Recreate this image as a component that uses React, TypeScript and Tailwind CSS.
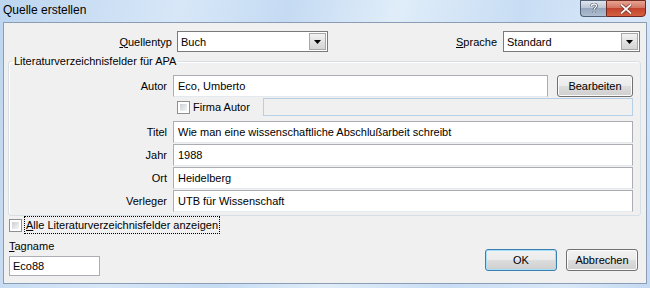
import { ReactNode } from 'react';

const ui = "font-['Liberation_Sans',Arial,sans-serif] text-[11px] leading-[14px] text-black";

function Combo({ value, className }: { value: string; className: string }) {
    return (
        <div className={`flex h-[21px] border border-[#7a7a7a] bg-white ${className}`}>
            <div className="flex flex-1 items-center pl-[3px]">{value}</div>
            <div className="m-[1px] flex w-[17px] items-center justify-center border border-[#a7a7a7] bg-[linear-gradient(#f3f3f3,#e2e2e2_50%,#d4d4d4)]">
                <svg width="7" height="4" viewBox="0 0 7 4">
                    <path d="M0 0h7L3.5 4z" fill="#000" />
                </svg>
            </div>
        </div>
    );
}

function Field({ value, className = '' }: { value?: string; className?: string }) {
    return (
        <div className={`flex h-[22px] items-center border border-[#abadb3] border-b-[#e3e9ef] bg-white pl-[4px] ${className}`}>
            {value}
        </div>
    );
}

function Button({ children, main, className = '' }: { children: ReactNode; main?: boolean; className?: string }) {
    return (
        <div
            className={`flex h-[22px] items-center justify-center rounded-[3px] border ${
                main ? 'border-[#3c7fb1] shadow-[inset_0_0_0_1px_#a6e0f8]' : 'border-[#707070] shadow-[inset_0_0_0_1px_#fcfcfc]'
            } bg-[linear-gradient(#f2f2f2,#ebebeb_50%,#dddddd_50%,#cfcfcf)] ${className}`}
        >
            {children}
        </div>
    );
}

function Check() {
    return (
        <div className="h-[13px] w-[13px] border border-[#8e8f8f] bg-white p-[2px]">
            <div className="h-full w-full bg-[linear-gradient(135deg,#cbcfd5,#f6f6f6)]" />
        </div>
    );
}

function Row({ label, children }: { label: string; children: ReactNode }) {
    return (
        <div className="flex items-center">
            <div className="w-[158px] text-right">{label}</div>
            <div className="ml-[6px] flex flex-1">{children}</div>
        </div>
    );
}

export default function App() {
    return (
        <div className={`${ui} flex h-[288px] w-[650px] flex-col bg-[linear-gradient(105deg,#bdd5ef_0%,#d7e7f8_25%,#c5dbf3_40%,#e0edf9_55%,#c8ddf4_72%,#d9e8f8_88%,#c3d9f2_100%)]`}>
            {/* title bar */}
            <div className="flex h-[22px] items-start">
                <div className="ml-[3px] mt-[3px] text-[12px]">Quelle erstellen</div>
                <div className="ml-auto mr-[4px] flex h-[17px]">
                    <div className="flex w-[26px] items-center justify-center rounded-bl-[4px] border border-r-0 border-[#4f5f75] bg-[linear-gradient(#dfe5ed,#bcc7d5_45%,#97a8be_50%,#aebdd0)]">
                        <svg width="8" height="11" viewBox="0 0 8 11">
                            <path d="M1.5 3.2C1.5 1.8 2.6 1 4 1s2.5.8 2.5 2.1c0 1.6-2.5 1.8-2.5 3.6M4 8.6v1.4" fill="none" stroke="#3a4658" strokeWidth="2.6" />
                            <path d="M1.5 3.2C1.5 1.8 2.6 1 4 1s2.5.8 2.5 2.1c0 1.6-2.5 1.8-2.5 3.6M4 8.6v1.4" fill="none" stroke="#fff" strokeWidth="1.3" />
                        </svg>
                    </div>
                    <div className="flex w-[40px] items-center justify-center rounded-br-[4px] border border-[#6e2a20] bg-[linear-gradient(#e8a493,#d47563_45%,#c2432d_50%,#d5603f)]">
                        <svg width="12" height="10" viewBox="0 0 12 10">
                            <path d="M1 0.5L11 9.5M11 0.5L1 9.5" stroke="#6b2a22" strokeWidth="3.2" />
                            <path d="M1 0.5L11 9.5M11 0.5L1 9.5" stroke="#f7f7f7" strokeWidth="1.8" />
                        </svg>
                    </div>
                </div>
            </div>

            {/* dialog body */}
            <div className="mx-[3px] flex h-[262px] flex-col border border-[#8a9db5] bg-[#f0f0f0]">
                <div className="flex items-center pr-[6px] pt-[8px]">
                    <div className="w-[168px] text-right">
                        <span className="underline">Q</span>uellentyp
                    </div>
                    <Combo value="Buch" className="ml-[5px] w-[151px]" />
                    <div className="ml-auto">
                        <span className="underline">S</span>prache
                    </div>
                    <Combo value="Standard" className="ml-[6px] w-[137px]" />
                </div>

                <fieldset className="ml-[4px] mr-[5px] mt-[2px] flex flex-col gap-[1px] rounded-[3px] border border-[#d5dfe5] pb-[3px] pr-[7px] pt-[7px] shadow-[inset_1px_1px_0_#fff]">
                    <legend className="ml-[3px] px-[2px]">Literaturverzeichnisfelder für APA</legend>
                    <Row label="Autor">
                        <Field value="Eco, Umberto" className="w-[375px]" />
                        <Button className="ml-[9px] w-[76px]">Bearbeiten</Button>
                    </Row>
                    <div className="mb-[4px] flex h-[18px] items-center pl-[168px]">
                        <Check />
                        <div className="ml-[3px] w-[70px]">Firma Autor</div>
                        <div className="h-[18px] flex-1 border border-[#b5cfe7] bg-[#f0f0f0]" />
                    </div>
                    <Row label="Titel">
                        <Field value="Wie man eine wissenschaftliche Abschlußarbeit schreibt" className="flex-1" />
                    </Row>
                    <Row label="Jahr">
                        <Field value="1988" className="flex-1" />
                    </Row>
                    <Row label="Ort">
                        <Field value="Heidelberg" className="flex-1" />
                    </Row>
                    <Row label="Verleger">
                        <Field value="UTB für Wissenschaft" className="flex-1" />
                    </Row>
                </fieldset>

                <div className="flex flex-1 items-end pb-[8px] pr-[8px]">
                    <div className="flex flex-col pl-[5px]">
                        <div className="flex items-center">
                            <Check />
                            <div className="ml-[2px] border border-dotted border-[#000] px-[1px] py-[1px]">
                                <span className="underline">A</span>lle Literaturverzeichnisfelder anzeigen
                            </div>
                        </div>
                        <div className="mt-[5px]">
                            <span className="underline">T</span>agname
                        </div>
                        <div className="mt-[3px] flex h-[20px] w-[91px] items-center border border-[#abadb3] bg-white pl-[3px]">
                            Eco88
                        </div>
                    </div>
                    <div className="mb-[5px] ml-auto flex gap-[9px]">
                        <Button main className="w-[72px]">OK</Button>
                        <Button className="w-[72px]">Abbrechen</Button>
                    </div>
                </div>
            </div>
        </div>
    );
}
